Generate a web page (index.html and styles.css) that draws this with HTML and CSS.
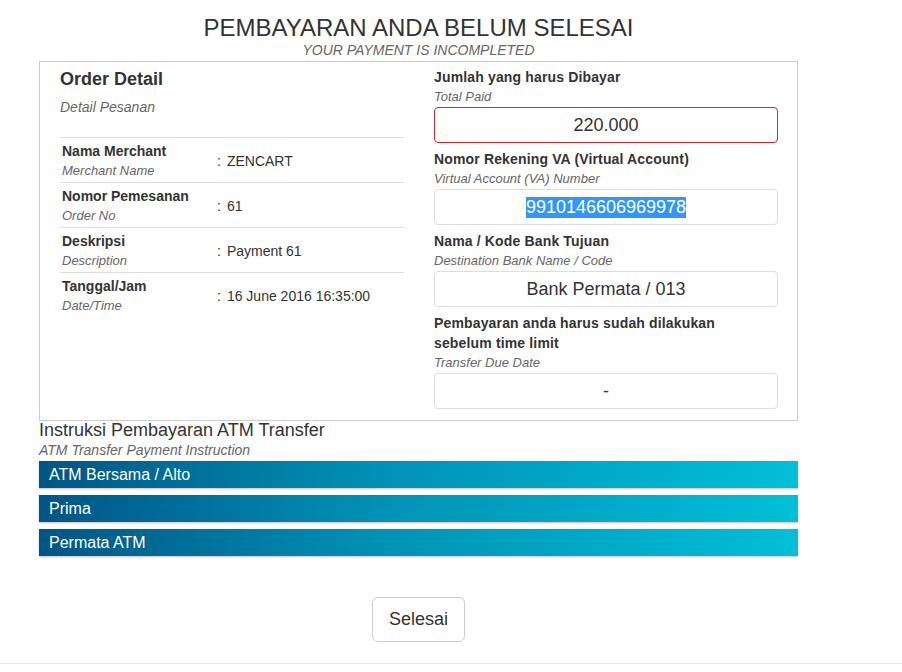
FILE: index.html
```html
<!DOCTYPE html>
<html>
<head>
<meta charset="utf-8">
<link rel="stylesheet" href="styles.css">
</head>
<body>
<div class="page">
  <div class="container">
    <h1 class="title">PEMBAYARAN ANDA BELUM SELESAI</h1>
    <p class="subtitle">YOUR PAYMENT IS INCOMPLETED</p>
    <div class="panel">
      <div class="col left">
        <h3 class="order-title">Order Detail</h3>
        <p class="order-sub">Detail Pesanan</p>
        <div class="rows">
          <div class="row">
            <div class="lbl"><b>Nama Merchant</b><i>Merchant Name</i></div>
            <div class="val">:<span>ZENCART</span></div>
          </div>
          <div class="row">
            <div class="lbl"><b>Nomor Pemesanan</b><i>Order No</i></div>
            <div class="val">:<span>61</span></div>
          </div>
          <div class="row">
            <div class="lbl"><b>Deskripsi</b><i>Description</i></div>
            <div class="val">:<span>Payment 61</span></div>
          </div>
          <div class="row">
            <div class="lbl"><b>Tanggal/Jam</b><i>Date/Time</i></div>
            <div class="val">:<span>16 June 2016 16:35:00</span></div>
          </div>
        </div>
      </div>
      <div class="col right">
        <div class="field">
          <b>Jumlah yang harus Dibayar</b>
          <i>Total Paid</i>
          <div class="box red">220.000</div>
        </div>
        <div class="field">
          <b>Nomor Rekening VA (Virtual Account)</b>
          <i>Virtual Account (VA) Number</i>
          <div class="box"><span class="sel">9910146606969978</span></div>
        </div>
        <div class="field">
          <b>Nama / Kode Bank Tujuan</b>
          <i>Destination Bank Name / Code</i>
          <div class="box">Bank Permata / 013</div>
        </div>
        <div class="field">
          <b>Pembayaran anda harus sudah dilakukan sebelum time limit</b>
          <i>Transfer Due Date</i>
          <div class="box">-</div>
        </div>
      </div>
    </div>
    <div class="instr">
      <div class="instr-title">Instruksi Pembayaran ATM Transfer</div>
      <div class="instr-sub">ATM Transfer Payment Instruction</div>
      <div class="bar">ATM Bersama / Alto</div>
      <div class="bar">Prima</div>
      <div class="bar">Permata ATM</div>
    </div>
    <div class="actions">
      <button class="btn">Selesai</button>
    </div>
  </div>
  <div class="footer-line"></div>
</div>
</body>
</html>
```

FILE: styles.css
```css
* { box-sizing: border-box; }
html, body { margin: 0; padding: 0; background: #fff; }
body {
  font-family: "Liberation Sans", Arial, sans-serif;
  color: #333;
}
.page { padding-top: 14px; }
.container {
  width: 759px;
  margin-left: 39px;
}
.title {
  margin: 0;
  font-size: 24px;
  line-height: 28px;
  font-weight: normal;
  text-align: center;
  color: #333;
}
.subtitle {
  margin: 0 0 3px;
  font-size: 14px;
  line-height: 16px;
  font-style: italic;
  text-align: center;
  color: #666;
}
.panel {
  width: 759px;
  border: 1px solid #ccc;
  display: flex;
  gap: 30px;
  padding: 5px 20px 11px;
}
.col { width: 344px; flex: none; }
.order-title {
  margin: 0;
  font-size: 18px;
  line-height: 24px;
  font-weight: bold;
  color: #333;
}
.order-sub {
  margin: 6px 0 20px;
  font-size: 14px;
  line-height: 20px;
  font-style: italic;
  color: #666;
}
.rows { border-top: 1px solid #ddd; }
.row {
  display: flex;
  align-items: center;
  height: 45px;
  border-bottom: 1px solid #ddd;
  padding: 1px 2px 0;
}
.row:last-child { border-bottom: none; }
.lbl { width: 155px; display: flex; flex-direction: column; }
.lbl b { font-size: 14px; line-height: 20px; color: #333; }
.lbl i { font-size: 13px; line-height: 20px; color: #666; }
.val { font-size: 14px; color: #333; }
.val span { margin-left: 6px; }
.field { display: flex; flex-direction: column; margin-bottom: 6px; }
.field:last-child { margin-bottom: 0; }
.field b { font-size: 14px; line-height: 20px; color: #333; letter-spacing: 0.15px; max-width: 320px; }
.field i { font-size: 13px; line-height: 20px; color: #666; }
.box {
  height: 36px;
  border: 1px solid #ddd;
  border-radius: 4px;
  display: flex;
  align-items: center;
  justify-content: center;
  font-size: 18px;
  color: #333;
}
.box.red { border-color: #d9232d; }
.sel { background: #3297fd; color: #fff; }
.instr { width: 759px; }
.instr-title { font-size: 18px; line-height: 19px; color: #333; }
.instr-sub { font-size: 14px; line-height: 21px; font-style: italic; color: #666; }
.bar {
  height: 27px;
  margin-bottom: 7px;
  padding-left: 10px;
  display: flex;
  align-items: center;
  font-size: 16px;
  color: #fff;
  background: linear-gradient(100deg, #005584 0%, #0092b6 45%, #00c0d8 100%);
  box-shadow: 0 1px 2px rgba(0,0,0,0.25);
}
.actions {
  display: flex;
  justify-content: center;
  padding-top: 34px;
}
.btn {
  width: 93px;
  height: 45px;
  background: #fff;
  border: 1px solid #ccc;
  border-radius: 6px;
  font-family: "Liberation Sans", Arial, sans-serif;
  font-size: 18px;
  color: #333;
  padding: 0;
}
.footer-line {
  margin-top: 21px;
  border-top: 1px solid #e5e5e5;
}
```
